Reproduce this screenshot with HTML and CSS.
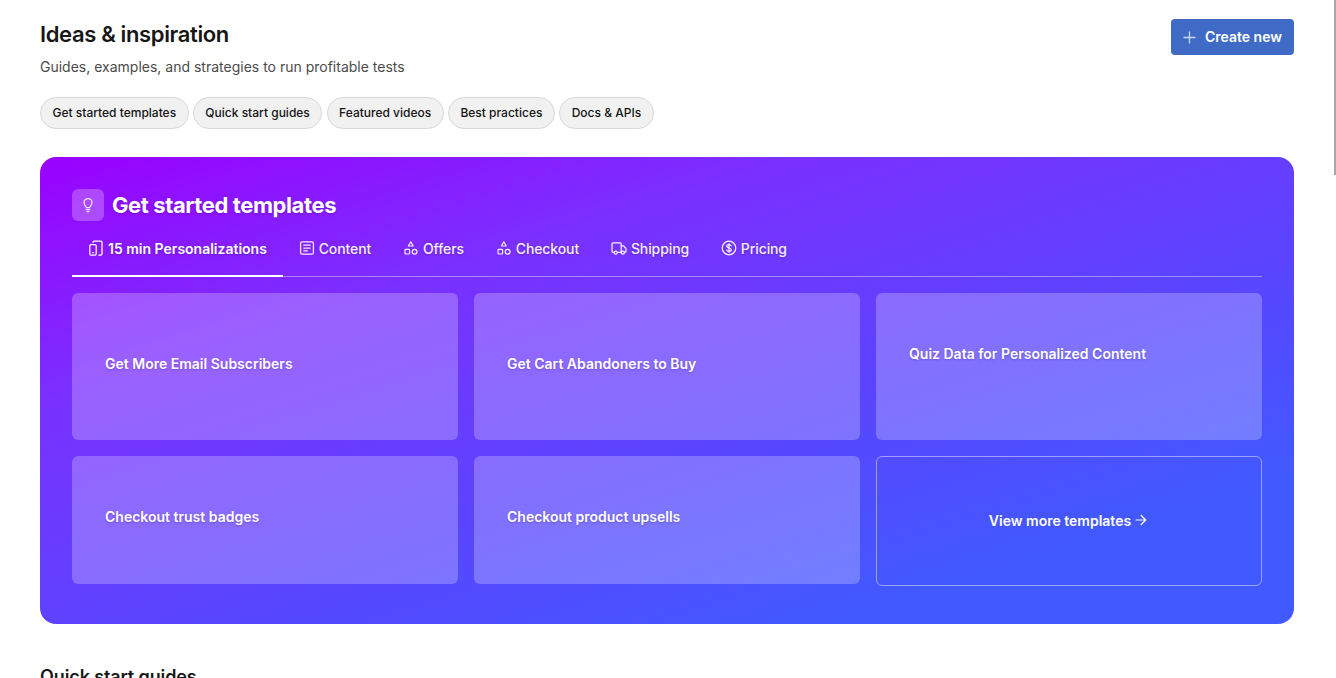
FILE: index.html
```html
<!DOCTYPE html>
<html lang="en">
<head>
<meta charset="utf-8">
<title>Ideas &amp; inspiration</title>
<link rel="stylesheet" href="styles.css">
</head>
<body>
<main class="page">
  <header class="head">
    <div>
      <h1 class="title">Ideas &amp; inspiration</h1>
      <p class="subtitle">Guides, examples, and strategies to run profitable tests</p>
    </div>
    <button class="create">
      <svg class="plus" width="13" height="13" viewBox="0 0 13 13" fill="none" stroke="currentColor" stroke-width="1.3" stroke-linecap="round"><path d="M6.5 1v11M1 6.5h11"/></svg>
      Create new
    </button>
  </header>
  <nav class="chips">
    <a class="chip">Get started templates</a>
    <a class="chip">Quick start guides</a>
    <a class="chip">Featured videos</a>
    <a class="chip">Best practices</a>
    <a class="chip">Docs &amp; APIs</a>
  </nav>
  <section class="hero">
    <div class="hero-head">
      <span class="bulb">
        <svg width="16" height="16" viewBox="0 0 16 16" fill="none" stroke="currentColor" stroke-width="1.2" stroke-linecap="round" stroke-linejoin="round"><path d="M6.2 10.6c0-1.5-2.2-2.3-2.2-5a4 4 0 0 1 8 0c0 2.7-2.2 3.5-2.2 5z"/><path d="M6.2 12.6h3.6M7 14.6h2"/></svg>
      </span>
      <h2 class="hero-title">Get started templates</h2>
    </div>
    <div class="tabs">
      <a class="tab active">
        <svg class="ico" width="16" height="16" viewBox="0 0 16 16" fill="none" stroke="currentColor" stroke-width="1.25" stroke-linecap="round" stroke-linejoin="round"><rect x="1.8" y="4.5" width="6.4" height="10.5" rx="1.2"/><path d="M4.7 12.7h.6M5 2.5V2.2A1.2 1.2 0 0 1 6.2 1h6.6A1.2 1.2 0 0 1 14 2.2v11.6a1.2 1.2 0 0 1-1.2 1.2h-2"/></svg>
        15 min Personalizations
      </a>
      <a class="tab">
        <svg class="ico" width="16" height="16" viewBox="0 0 16 16" fill="none" stroke="currentColor" stroke-width="1.25" stroke-linecap="round" stroke-linejoin="round"><rect x="1.6" y="1.8" width="12.8" height="12.4" rx="1.5"/><path d="M4.8 5.2h6.4M4.8 8h6.4M4.8 10.8h3.6"/></svg>
        Content
      </a>
      <a class="tab">
        <svg class="ico" width="16" height="16" viewBox="0 0 16 16" fill="none" stroke="currentColor" stroke-width="1.2" stroke-linecap="round" stroke-linejoin="round"><path d="M7.8 1.8l2.4 4.2H5.4z"/><rect x="2" y="9.4" width="4.6" height="4.6" rx=".7"/><circle cx="11.6" cy="11.7" r="2.4"/></svg>
        Offers
      </a>
      <a class="tab">
        <svg class="ico" width="16" height="16" viewBox="0 0 16 16" fill="none" stroke="currentColor" stroke-width="1.2" stroke-linecap="round" stroke-linejoin="round"><path d="M7.8 1.8l2.4 4.2H5.4z"/><rect x="2" y="9.4" width="4.6" height="4.6" rx=".7"/><circle cx="11.6" cy="11.7" r="2.4"/></svg>
        Checkout
      </a>
      <a class="tab">
        <svg class="ico" width="16" height="16" viewBox="0 0 16 16" fill="none" stroke="currentColor" stroke-width="1.25" stroke-linecap="round" stroke-linejoin="round"><path d="M3 12.3H2a1 1 0 0 1-1-1V3.8a1 1 0 0 1 1-1h7.2a1 1 0 0 1 1 1v8.5H6.4"/><path d="M10.2 5.8h2.4l2.4 2.8v2.7a1 1 0 0 1-1 1h-.6"/><circle cx="4.7" cy="12.6" r="1.6"/><circle cx="11.9" cy="12.6" r="1.6"/></svg>
        Shipping
      </a>
      <a class="tab">
        <svg class="ico" width="16" height="16" viewBox="0 0 16 16" fill="none" stroke="currentColor" stroke-width="1.25" stroke-linecap="round" stroke-linejoin="round"><circle cx="8" cy="8" r="6.8"/><path d="M10.2 5.9C9.9 5 9 4.7 8 4.7c-1.3 0-2.2.6-2.2 1.6 0 2.3 4.5 1.1 4.5 3.4 0 1-1 1.6-2.3 1.6-1.1 0-2-.4-2.3-1.3M8 3.6v8.8"/></svg>
        Pricing
      </a>
    </div>
    <div class="grid">
      <a class="card">Get More Email Subscribers</a>
      <a class="card">Get Cart Abandoners to Buy</a>
      <a class="card card-raised">Quiz Data for Personalized Content</a>
      <a class="card">Checkout trust badges</a>
      <a class="card">Checkout product upsells</a>
      <a class="more">View more templates
        <svg width="12" height="12" viewBox="0 0 12 12" fill="none" stroke="currentColor" stroke-width="1.2" stroke-linecap="round" stroke-linejoin="round"><path d="M1 6h9.5M6.2 1.5 10.7 6l-4.5 4.5"/></svg>
      </a>
    </div>
  </section>
  <h2 class="next">Quick start guides</h2>
</main>
<div class="scrollbar"></div>
</body>
</html>
```
FILE: styles.css
```css
* { box-sizing: border-box; }
html, body { height: 100%; margin: 0; overflow: hidden; background: #fff; }
body { font-family: Inter, "Liberation Sans", sans-serif; color: #1a1a1a; }
.page { padding: 19px 42px 0 40px; }
.head { display: flex; justify-content: space-between; align-items: flex-start; }
.title { margin: 0; padding-top: 1px; font-size: 22px; line-height: 28px; font-weight: 600; letter-spacing: -0.36px; color: #171717; }
.subtitle { margin: 9px 0 0; font-size: 14px; line-height: 20px; color: #4b4b4b; }
.create { display: flex; align-items: center; gap: 9px; height: 36px; padding: 0 12px; border: 0; border-radius: 4px; background: #3f6bc6; color: #fff; font: 600 14px/20px Inter, "Liberation Sans", sans-serif; }
.plus { color: #c9d6f2; }
.chips { display: flex; gap: 4.25px; margin-top: 20px; }
.chip { display: flex; align-items: center; height: 32px; padding: 0 11.5px 1px; border: 1px solid #d9d9d9; border-radius: 16px; background: #f1f1f1; font-size: 12px; font-weight: 500; color: #141414; white-space: nowrap; }
.hero { margin-top: 28px; height: 467px; padding: 32px; border-radius: 16px; background: linear-gradient(162deg, #9a00ff 0%, #7a30ff 28%, #5a45ff 58%, #405aff 84%); color: #fff; }
.hero-head { display: flex; align-items: center; gap: 8px; height: 32px; }
.bulb { display: flex; align-items: center; justify-content: center; width: 32px; height: 32px; border-radius: 6px; background: rgba(255, 255, 255, 0.25); color: #f4e9ff; }
.hero-title { margin: 0; font-size: 22px; line-height: 32px; font-weight: 700; letter-spacing: -0.4px; text-shadow: 0 1px 2px rgba(40, 0, 90, 0.25); }
.tabs { display: flex; height: 44px; margin-top: 12px; border-bottom: 1px solid rgba(255, 255, 255, 0.4); }
.tab { display: flex; align-items: center; gap: 3.8px; height: 44px; padding: 0 16px 14px; font-size: 14px; font-weight: 500; letter-spacing: -0.1px; white-space: nowrap; color: #f6efff; text-shadow: 0 1px 2px rgba(40, 0, 90, 0.25); }
.tab.active { gap: 4px; padding-bottom: 12px; border-bottom: 2px solid #fff; font-weight: 600; letter-spacing: 0; color: #fff; }
.ico { flex: none; }
.grid { display: grid; grid-template-columns: repeat(3, 1fr); grid-template-rows: 147px 130px; gap: 16px; margin-top: 16px; }
.card { display: flex; align-items: center; padding: 0 33px 7px; border-radius: 6px; background: rgba(255, 255, 255, 0.24); font-size: 14px; font-weight: 600; text-shadow: 0 1px 2px rgba(40, 0, 90, 0.25); }
.grid .card:nth-child(n+4) { height: 128px; }
.grid .card-raised { padding-bottom: 27px; }
.more { display: flex; align-items: center; justify-content: center; gap: 4px; padding: 0 2px 2px 0; border: 1px solid rgba(255, 255, 255, 0.45); border-radius: 6px; font-size: 14px; font-weight: 600; }
.next { margin: 41px 0 0; font-size: 18px; line-height: 24px; font-weight: 600; letter-spacing: -0.12px; color: #171717; }
.scrollbar { position: fixed; top: 0; right: 0; width: 2px; height: 175px; background: #a8a8a8; }
```
